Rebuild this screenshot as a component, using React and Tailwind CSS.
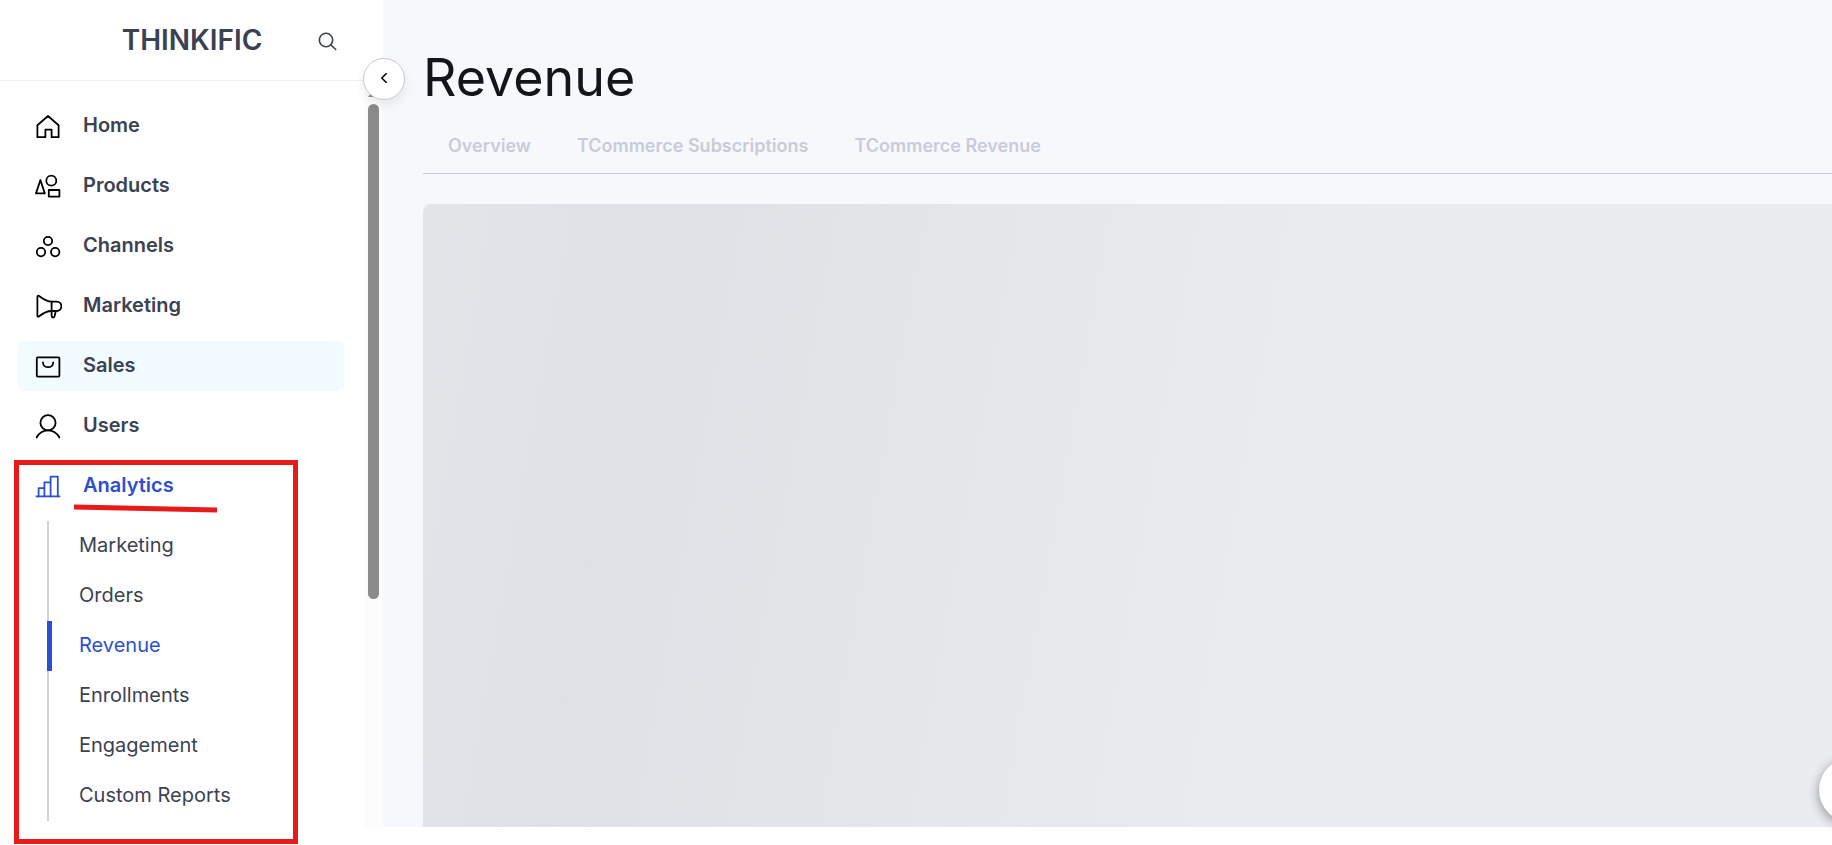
import React, { useState } from "react";

const icons = {
  Home: <path d="M3.4 13.2 14 4l10.6 9.2v12h-7v-7.6h-6.2v7.6h-8z" />,
  Products: (
    <>
      <path d="M6.4 8 10.8 21.4H2z" />
      <circle cx="17.3" cy="8.7" r="5" />
      <path d="M14.8 18h10.6v6.6H14.8z" />
    </>
  ),
  Channels: (
    <>
      <circle cx="14" cy="9" r="4.2" />
      <circle cx="7" cy="20.1" r="4.2" />
      <circle cx="21.2" cy="20.1" r="4.2" />
    </>
  ),
  Marketing: (
    <>
      <path d="M3.4 4.6c0-.8.8-1.2 1.5-.8C8.6 6.500 12 9.600 17.8 9.600h4.900a4.700 4.700 0 0 1 0 9.400h-4.900C12 19 8.600 21.400 4.900 24.500c-.7.5-1.500.1-1.500-.7z" />
      <path d="M17.600 9.600v14c0 2.400 2.600 2.500 3 .5l1.200-5" />
    </>
  ),
  Sales: (
    <>
      <rect x="2.8" y="5.4" width="22.6" height="19.2" rx="1" />
      <path d="M9 10.4c0 6.4 10.2 6.4 10.2 0" />
    </>
  ),
  Users: (
    <>
      <circle cx="14" cy="10.7" r="7.6" />
      <path d="M2.6 25.5c2.4-4.5 6.5-7.1 11.4-7.1s9 2.6 11.4 7.1" />
    </>
  ),
  Analytics: (
    <>
      <path d="M2.5 24.4h23" />
      <path d="M4.6 24.4v-8.2h5.8v8.2M10.4 16.2v-5.8h6.2v14M16.6 10.4V4.6h7.2v19.8" />
    </>
  ),
};

const menu = ["Home", "Products", "Channels", "Marketing", "Sales", "Users", "Analytics"];

const reports = ["Marketing", "Orders", "Revenue", "Enrollments", "Engagement", "Custom Reports"];

const tabs = ["Overview", "TCommerce Subscriptions", "TCommerce Revenue"];

const MenuIcon = ({ name }) => (
  <svg
    viewBox="0 0 28 28"
    fill="none"
    stroke="currentColor"
    strokeWidth="1.8"
    strokeLinecap="round"
    strokeLinejoin="round"
    className={`size-7 shrink-0 ${name === "Analytics" ? "text-[#2b4fd0]" : "text-black"}`}
    aria-hidden="true"
  >
    {icons[name]}
  </svg>
);

const Sidebar = () => {
  const [report, setReport] = useState("Revenue");

  return (
    <aside className="relative flex w-[383px] shrink-0 flex-col bg-white">
      <div className="flex h-[81px] items-center justify-end border-b border-[#f0f1f5] pr-[45px]">
        <a href="#home" className="w-[180px] text-center text-[28px] leading-8 font-semibold text-[#3b4252]">
          THINKIFIC
        </a>
        <button type="button" aria-label="Search" className="ml-[36px] mt-[3px] text-[#3b4252]">
          <svg
            viewBox="0 0 20 20"
            fill="none"
            stroke="currentColor"
            strokeWidth="1.6"
            strokeLinecap="round"
            className="size-5"
          >
            <circle cx="8" cy="8" r="6.7" />
            <path d="m12.9 12.9 4.8 4.6" />
          </svg>
        </button>
      </div>

      <div className="flex flex-1">
        <nav className="flex-1 pt-5 pr-5 pb-[6px] pl-[18px]">
          <ul className="flex flex-col gap-[10px]">
            {menu.map((item) => (
              <li key={item}>
                <a
                  href={`#${item.toLowerCase()}`}
                  className={`flex h-[50px] items-center gap-[21px] rounded-md pl-4 text-[20px] leading-6 font-semibold ${
                    item === "Analytics" ? "text-[#2b4fd0]" : "text-[#3b4252]"
                  } ${item === "Sales" ? "bg-[#f2fbff]" : ""}`}
                >
                  <MenuIcon name={item} />
                  <span className="pb-[2px]">{item}</span>
                </a>
              </li>
            ))}
          </ul>
          <ul className="mt-[10px] ml-[29px]">
            {reports.map((item) => (
              <li key={item}>
                <a
                  href="#analytics"
                  onClick={() => setReport(item)}
                  className={`flex h-[50px] items-center pb-[2px] text-[20px] leading-6 ${
                    item === report
                      ? "border-l-[5px] border-[#2b4fd0] pl-[27px] text-[#2b4fd0]"
                      : "border-l-2 border-[#d2d3d8] pl-[30px] text-[#3b4252]"
                  }`}
                >
                  {item}
                </a>
              </li>
            ))}
          </ul>
        </nav>

        {/* Scroll track */}
        <div className="flex w-[19px] flex-col items-center bg-[#fcfcfc] pt-[9px]">
          <svg viewBox="0 0 11 7" className="h-[7px] w-[11px]" aria-hidden="true">
            <path d="M5.5 0 11 7H0z" fill="#8b8b8b" />
          </svg>
          <div className="mt-[7px] h-[495px] w-[11px] rounded-full bg-[#8b8b8b]"></div>
        </div>
      </div>

      <button
        type="button"
        aria-label="Collapse menu"
        className="absolute top-[58px] -right-[22px] z-10 flex size-[42px] items-center justify-center rounded-full border border-[#c9cad4] bg-white shadow-[0_5px_12px_rgba(0,0,0,0.08)]"
      >
        <svg viewBox="0 0 12 12" fill="none" stroke="black" strokeWidth="1.6" className="size-3 mb-[2px]">
          <path d="M8.6 1.2 3.8 6l4.8 4.8" />
        </svg>
      </button>

      {/* Highlight around the analytics section */}
      <div className="pointer-events-none absolute top-[460px] left-[14px] h-[384px] w-[284px] border-[5px] border-[#e81b1b]">
        <svg viewBox="0 0 143 9" className="absolute top-[39px] left-[55px] h-[9px] w-[143px]">
          <path d="M0 3 143 6" stroke="#e81b1b" strokeWidth="5" />
        </svg>
      </div>
    </aside>
  );
};

const RevenuePage = () => {
  return (
    <main className="flex min-w-0 flex-1 flex-col bg-[#f7f8fc] pt-[46px] pl-10">
      <h1 className="text-[52px] leading-[64px] text-[#12161b]">Revenue</h1>
      <nav className="mt-[17px] flex h-[47px] gap-[46px] border-b border-[#c9cbd2] pt-[7px] pl-[25px]">
        {tabs.map((tab) => (
          <a key={tab} href="#tab" className="text-[18px] leading-6 font-semibold text-[#c9ccd7]">
            {tab}
          </a>
        ))}
      </nav>
      <div className="mt-[30px] flex-1 rounded-tl-lg bg-[linear-gradient(100deg,#e4e5e9_0,#e0e1e6_225px,#e6e7ea_620px,#ebecf0_940px)]"></div>
    </main>
  );
};

const App = () => {
  return (
    <div className="flex min-h-screen flex-col bg-white pb-[18px] font-['Inter',sans-serif]">
      <div className="relative flex flex-1 overflow-x-clip">
        <Sidebar />
        <RevenuePage />
        <button
          type="button"
          aria-label="Open chat"
          className="absolute -right-[51px] bottom-[5px] size-16 rounded-full bg-white shadow-[0_3px_12px_rgba(0,0,0,0.4)]"
        ></button>
      </div>
    </div>
  );
};

export default App;
